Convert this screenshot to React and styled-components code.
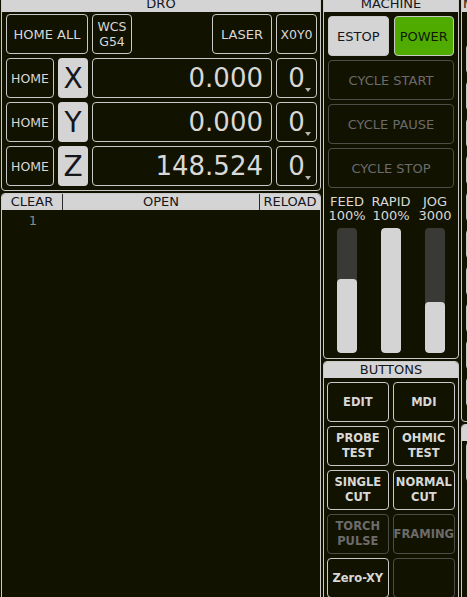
import React from 'react';
import styled, { createGlobalStyle, css } from 'styled-components';

const color = {
  bg: '#121200',
  line: '#c9c9c9',
  head: '#d4d4d4',
  text: '#d8d8d8',
  ink: '#15151c',
  dim: '#6b6b6b',
  dimLine: '#4d4d48',
  track: '#393935',
  green: '#4fab00',
};

const GlobalStyle = createGlobalStyle`
  html, body {
    margin: 0;
    padding: 0;
    background: ${color.bg};
    overflow: hidden;
  }
  body {
    font-family: 'DejaVu Sans', 'Liberation Sans', sans-serif;
  }
`;

const AXES = [
  { axis: 'X', value: '0.000' },
  { axis: 'Y', value: '0.000' },
  { axis: 'Z', value: '148.524' },
];

const SLIDERS = [
  { label: 'FEED', value: '100%', level: 0.59 },
  { label: 'RAPID', value: '100%', level: 1 },
  { label: 'JOG', value: '3000', level: 0.41 },
];

const BUTTONS = [
  { label: 'EDIT' },
  { label: 'MDI' },
  { label: 'PROBE\nTEST' },
  { label: 'OHMIC\nTEST' },
  { label: 'SINGLE\nCUT' },
  { label: 'NORMAL\nCUT' },
  { label: 'TORCH\nPULSE', disabled: true },
  { label: 'FRAMING', disabled: true },
  { label: 'Zero-XY' },
  { label: '', disabled: true },
];

function App() {
  return (
    <>
      <GlobalStyle />
      <Screen>
        <Column $width={320}>
          <Panel>
            <PanelHeader>DRO</PanelHeader>
            <DroGrid>
              <Button $span={2}>HOME ALL</Button>
              <TopMiddle>
                <Button $size={12.5} $width={40}>{'WCS\nG54'}</Button>
                <Button $width={60}>LASER</Button>
              </TopMiddle>
              <Button $size={12.5}>X0Y0</Button>
              {AXES.map(({ axis, value }) => (
                <React.Fragment key={axis}>
                  <Button $size={12.5}>HOME</Button>
                  <AxisLabel>{axis}</AxisLabel>
                  <ValueBox>{value}</ValueBox>
                  <OffsetBox>
                    0
                    <Caret />
                  </OffsetBox>
                </React.Fragment>
              ))}
            </DroGrid>
          </Panel>
          <Panel $height={420}>
            <FileBar>
              <FileCell>CLEAR</FileCell>
              <FileCell $divided>OPEN</FileCell>
              <FileCell $divided>RELOAD</FileCell>
            </FileBar>
            <Editor>
              <Gutter>1</Gutter>
            </Editor>
          </Panel>
        </Column>

        <Column $width={136}>
          <Panel>
            <PanelHeader>MACHINE</PanelHeader>
            <MachineBody>
              <PairRow>
                <Button $variant="light">ESTOP</Button>
                <Button $variant="green">POWER</Button>
              </PairRow>
              <Button $variant="dim">CYCLE START</Button>
              <Button $variant="dim">CYCLE PAUSE</Button>
              <Button $variant="dim">CYCLE STOP</Button>
              <SliderRow>
                {SLIDERS.map(({ label, value, level }) => (
                  <SliderColumn key={label}>
                    <SliderLabel>
                      {label}
                      <br />
                      {value}
                    </SliderLabel>
                    <Track>
                      <Fill style={{ height: `${level * 100}%` }} />
                    </Track>
                  </SliderColumn>
                ))}
              </SliderRow>
            </MachineBody>
          </Panel>
          <Panel $height={260}>
            <PanelHeader>BUTTONS</PanelHeader>
            <ButtonGrid>
              {BUTTONS.map(({ label, disabled }, i) => (
                <Button key={i} $bold $variant={disabled ? 'dim' : undefined}>
                  {label}
                </Button>
              ))}
            </ButtonGrid>
          </Panel>
        </Column>

        <Column $width={160}>
          <Panel $height={427}>
            <PanelHeader $align="left">MDI</PanelHeader>
            <SideList>
              {Array.from({ length: 10 }).map((_, i) => (
                <SideButton key={i} />
              ))}
            </SideList>
          </Panel>
          <Panel $height={200}>
            <PanelHeader />
            <SideList $top={1}>
              <Button />
            </SideList>
          </Panel>
        </Column>
      </Screen>
    </>
  );
}

export default App;

const Screen = styled.div`
  display: flex;
  gap: 2px;
  width: 466px;
  height: 602px;
  margin-top: -5px;
  padding-left: 1px;
  overflow: hidden;
`;

const Column = styled.div`
  display: flex;
  flex-direction: column;
  gap: 2px;
  width: ${(p) => p.$width}px;
  flex-shrink: 0;
`;

const Panel = styled.section`
  display: flex;
  flex-direction: column;
  flex-shrink: 0;
  box-sizing: border-box;
  border: 1px solid ${color.line};
  border-radius: 4px;
  overflow: hidden;
  ${(p) => p.$height && `height: ${p.$height}px;`}
`;

const PanelHeader = styled.header`
  height: 16px;
  line-height: 16px;
  padding: 0 1px;
  background: ${color.head};
  color: ${color.ink};
  font-size: 13px;
  text-align: ${(p) => p.$align || 'center'};
  flex-shrink: 0;
`;

const variants = {
  light: css`
    background: ${color.head};
    color: ${color.ink};
  `,
  green: css`
    background: ${color.green};
    color: #0f1a05;
  `,
  dim: css`
    border-color: ${color.dimLine};
    color: ${color.dim};
  `,
};

const Button = styled.div`
  display: flex;
  align-items: center;
  justify-content: center;
  box-sizing: border-box;
  height: 40px;
  ${(p) => p.$width && `width: ${p.$width}px;`}
  ${(p) => p.$span && `grid-column: span ${p.$span};`}
  border: 1px solid ${color.line};
  border-radius: 4px;
  color: ${color.text};
  font-size: ${(p) => (p.$bold ? 11.5 : p.$size || 13)}px;
  font-weight: ${(p) => (p.$bold ? 700 : 400)};
  line-height: 15px;
  text-align: center;
  white-space: pre-line;
  ${(p) => p.$variant && variants[p.$variant]}
`;

const DroGrid = styled.div`
  display: grid;
  grid-template-columns: 48px 30px 180px 41px;
  grid-auto-rows: 40px;
  gap: 4px;
  padding: 2px 4px 4px;
`;

const TopMiddle = styled.div`
  display: flex;
  justify-content: space-between;
`;

const AxisLabel = styled.div`
  display: flex;
  align-items: center;
  justify-content: center;
  background: ${color.head};
  border-radius: 4px;
  color: ${color.ink};
  font-size: 28px;
`;

const ValueBox = styled.div`
  display: flex;
  align-items: center;
  justify-content: flex-end;
  padding-right: 8px;
  border: 1px solid ${color.line};
  border-radius: 4px;
  color: ${color.text};
  font-size: 26px;
`;

const OffsetBox = styled(ValueBox)`
  position: relative;
  justify-content: center;
  padding: 0;
`;

const Caret = styled.span`
  position: absolute;
  right: 5px;
  bottom: 5px;
  width: 0;
  height: 0;
  border-left: 3px solid transparent;
  border-right: 3px solid transparent;
  border-top: 4px solid #b5b5b5;
`;

const FileBar = styled.div`
  display: grid;
  grid-template-columns: 60px 1fr 61px;
  height: 16px;
  background: ${color.head};
  flex-shrink: 0;
`;

const FileCell = styled.div`
  color: ${color.ink};
  font-size: 13px;
  line-height: 16px;
  text-align: center;
  ${(p) => p.$divided && `border-left: 1px solid #2a2a2a;`}
`;

const Editor = styled.div`
  display: flex;
  flex: 1;
  padding-top: 3px;
`;

const Gutter = styled.div`
  width: 35px;
  color: #8a8a8a;
  font-size: 13px;
  line-height: 16px;
  text-align: right;
`;

const MachineBody = styled.div`
  display: flex;
  flex-direction: column;
  gap: 4px;
  padding: 4px 4px 5px;
`;

const PairRow = styled.div`
  display: grid;
  grid-template-columns: 1fr 1fr;
  gap: 5px;
`;

const SliderRow = styled.div`
  display: grid;
  grid-template-columns: repeat(3, 44px);
  margin: 3px -3px 0;
`;

const SliderColumn = styled.div`
  display: flex;
  flex-direction: column;
  align-items: center;
  gap: 5px;
`;

const SliderLabel = styled.div`
  color: ${color.text};
  font-size: 13px;
  line-height: 14px;
  text-align: center;
  white-space: nowrap;
`;

const Track = styled.div`
  display: flex;
  align-items: flex-end;
  width: 20px;
  height: 125px;
  background: ${color.track};
  border-radius: 4px;
  overflow: hidden;
`;

const Fill = styled.div`
  width: 100%;
  background: ${color.head};
  border-radius: 4px;
`;

const ButtonGrid = styled.div`
  display: grid;
  grid-template-columns: 1fr 1fr;
  grid-auto-rows: 40px;
  gap: 4px;
  padding: 4px 3px;
`;

const SideList = styled.div`
  display: flex;
  flex-direction: column;
  gap: 7px;
  padding: ${(p) => (p.$top ?? 32)}px 0 0 4px;
`;

const SideButton = styled.div`
  height: 30px;
  box-sizing: border-box;
  border: 1px solid ${color.line};
  border-radius: 4px;
`;
